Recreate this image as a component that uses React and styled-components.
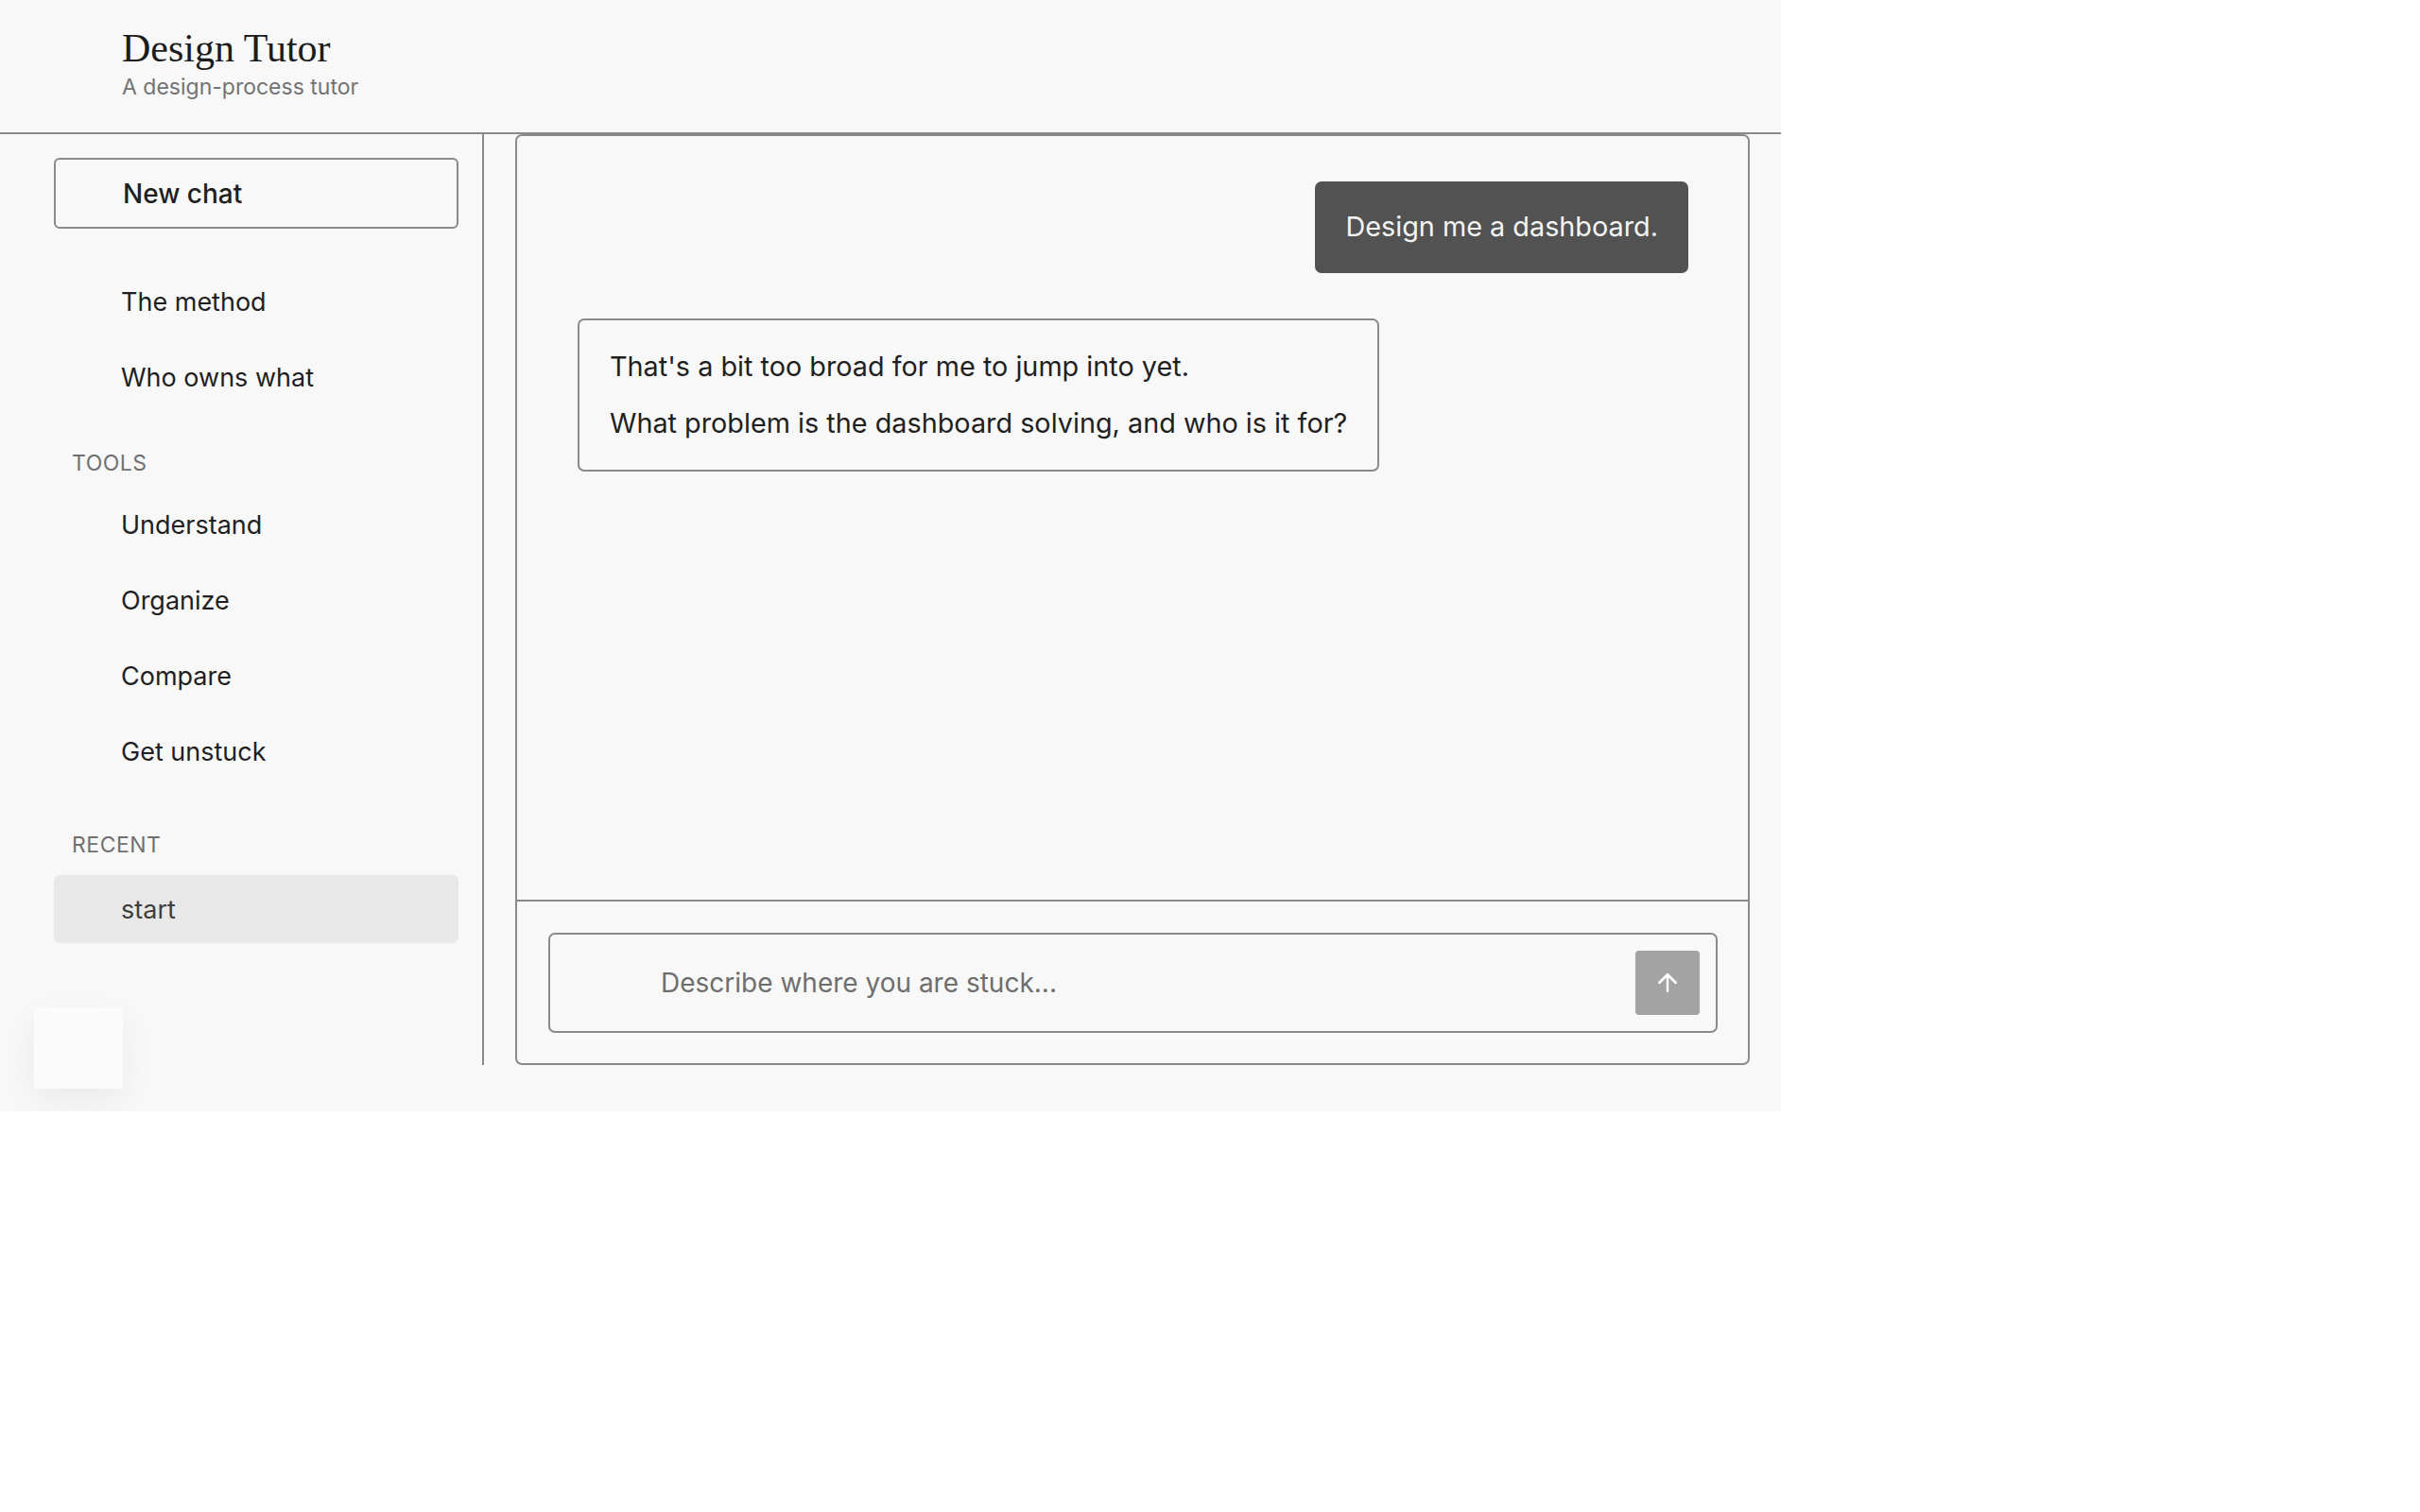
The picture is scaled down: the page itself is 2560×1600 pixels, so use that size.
import React from "react";
import styled, { createGlobalStyle } from "styled-components";

const GlobalStyle = createGlobalStyle`
  * {
    box-sizing: border-box;
  }
  body {
    margin: 0;
    background: #ffffff;
    font-family: Inter, "Noto Sans", sans-serif;
    color: #1f1f1f;
  }
`;

const Frame = styled.div`
  position: relative;
  width: 1884px;
  height: 1176px;
  display: flex;
  flex-direction: column;
  background: #f8f8f8;
`;

const Header = styled.header`
  height: 142px;
  flex-shrink: 0;
  display: flex;
  flex-direction: column;
  gap: 1px;
  padding: 27px 0 0 129px;
  border-bottom: 2px solid #8a8a8a;
`;

const Title = styled.h1`
  margin: 0;
  font-family: "Liberation Serif", "Times New Roman", serif;
  font-weight: 400;
  font-size: 42px;
  line-height: 48px;
  color: #1c1c1c;
`;

const Subtitle = styled.div`
  font-size: 23px;
  line-height: 32px;
  color: #737373;
`;

const Body = styled.div`
  flex: 1;
  display: flex;
  padding-bottom: 49px;
  min-height: 0;
`;

const Sidebar = styled.aside`
  width: 512px;
  flex-shrink: 0;
  display: flex;
  flex-direction: column;
  padding: 25px 25px 0 57px;
  border-right: 2px solid #8a8a8a;
`;

const NewChatButton = styled.button`
  height: 75px;
  display: flex;
  align-items: center;
  padding: 0 0 0 71px;
  border: 2px solid #8a8a8a;
  border-radius: 6px;
  background: transparent;
  font-family: inherit;
  font-size: 28px;
  font-weight: 500;
  color: #1f1f1f;
  text-align: left;
  cursor: pointer;
`;

const NavList = styled.nav`
  display: flex;
  flex-direction: column;
  gap: 8px;
  margin-top: ${(p) => p.$top}px;
`;

const NavItem = styled.div`
  height: 72px;
  display: flex;
  align-items: center;
  padding-left: 71px;
  border-radius: 6px;
  font-size: 27px;
  color: ${(p) => (p.$active ? "#3d3d3d" : "#1f1f1f")};
  background: ${(p) => (p.$active ? "#e8e8e8" : "transparent")};
  cursor: pointer;
`;

const SectionLabel = styled.div`
  margin-top: ${(p) => p.$top}px;
  padding-left: 19px;
  font-size: 23px;
  line-height: 32px;
  letter-spacing: 0.5px;
  text-transform: uppercase;
  color: #707070;
`;

const ChatPanel = styled.main`
  flex: 1;
  display: flex;
  flex-direction: column;
  margin: 0 33px;
  border: 2px solid #8a8a8a;
  border-radius: 7px;
`;

const Messages = styled.div`
  flex: 1;
  display: flex;
  flex-direction: column;
  gap: 48px;
  padding: 48px 63px 48px 64px;
  border-bottom: 2px solid #8a8a8a;
`;

const UserBubble = styled.div`
  align-self: flex-end;
  padding: 27px 32px 28px;
  border-radius: 7px;
  background: #525252;
  color: #f4f4f4;
  font-size: 28.8px;
  line-height: 42px;
`;

const AssistantBubble = styled.div`
  align-self: flex-start;
  display: flex;
  flex-direction: column;
  gap: 18px;
  padding: 28px 32px;
  border: 2px solid #8a8a8a;
  border-radius: 7px;
  font-size: 28.8px;
  line-height: 42px;
  color: #1f1f1f;

  p {
    margin: 0;
  }
`;

const ComposerArea = styled.div`
  padding: 33px 32px 32px 33px;
`;

const Composer = styled.form`
  display: flex;
  align-items: center;
  padding: 17px;
  border: 2px solid #8a8a8a;
  border-radius: 7px;
`;

const Input = styled.input`
  flex: 1;
  height: 68px;
  padding: 0 16px 0 100px;
  border: none;
  outline: none;
  background: transparent;
  font-family: inherit;
  font-size: 28px;
  color: #1f1f1f;

  &::placeholder {
    color: #6e6e6e;
  }
`;

const SendButton = styled.button`
  width: 68px;
  height: 68px;
  display: flex;
  align-items: center;
  justify-content: center;
  border: none;
  border-radius: 4px;
  background: #a3a3a3;
  color: #ffffff;
  cursor: pointer;
`;

const FloatingBadge = styled.div`
  position: absolute;
  left: 36px;
  bottom: 24px;
  width: 94px;
  height: 86px;
  background: #fbfbfb;
  box-shadow: 0 12px 36px rgba(0, 0, 0, 0.06);
`;

const ArrowUp = () => (
  <svg width="30" height="30" viewBox="0 0 24 24" fill="none" stroke="currentColor" strokeWidth="2" strokeLinecap="round" strokeLinejoin="round">
    <path d="M12 19V5" />
    <path d="m5 12 7-7 7 7" />
  </svg>
);

const mainLinks = ["The method", "Who owns what"];
const tools = ["Understand", "Organize", "Compare", "Get unstuck"];

const App = () => {
  return (
    <>
      <GlobalStyle />
      <Frame>
        <Header>
          <Title>Design Tutor</Title>
          <Subtitle>A design-process tutor</Subtitle>
        </Header>
        <Body>
          <Sidebar>
            <NewChatButton type="button">New chat</NewChatButton>
            <NavList $top={41}>
              {mainLinks.map((item) => (
                <NavItem key={item}>{item}</NavItem>
              ))}
            </NavList>
            <SectionLabel $top={39}>Tools</SectionLabel>
            <NavList $top={13}>
              {tools.map((item) => (
                <NavItem key={item}>{item}</NavItem>
              ))}
            </NavList>
            <SectionLabel $top={47}>Recent</SectionLabel>
            <NavList $top={16}>
              <NavItem $active>start</NavItem>
            </NavList>
          </Sidebar>
          <ChatPanel>
            <Messages>
              <UserBubble>Design me a dashboard.</UserBubble>
              <AssistantBubble>
                <p>That's a bit too broad for me to jump into yet.</p>
                <p>What problem is the dashboard solving, and who is it for?</p>
              </AssistantBubble>
            </Messages>
            <ComposerArea>
              <Composer onSubmit={(e) => e.preventDefault()}>
                <Input placeholder="Describe where you are stuck..." />
                <SendButton type="submit" aria-label="Send">
                  <ArrowUp />
                </SendButton>
              </Composer>
            </ComposerArea>
          </ChatPanel>
        </Body>
        <FloatingBadge />
      </Frame>
    </>
  );
};

export default App;
